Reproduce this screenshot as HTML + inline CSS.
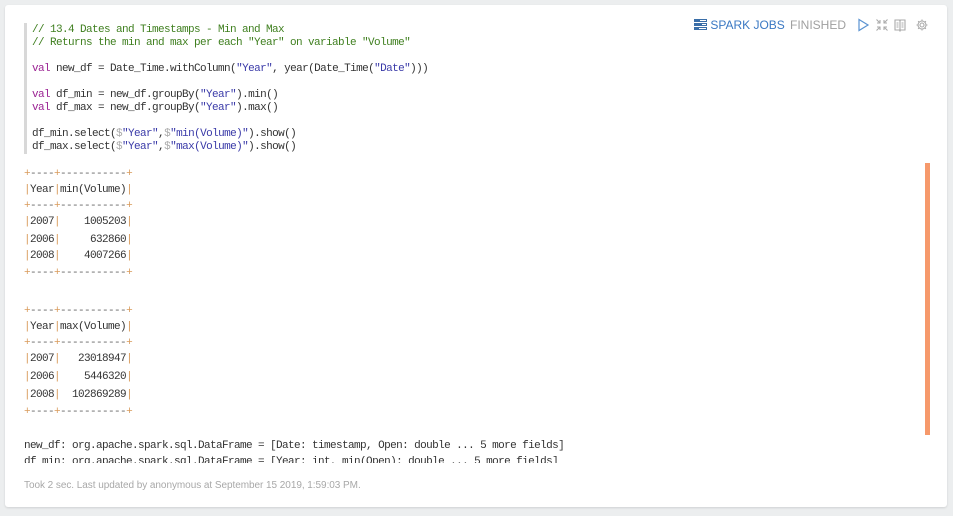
<!DOCTYPE html>
<html><head><meta charset="utf-8"><style>
body{margin:0;width:953px;height:516px;background:#eceeef;position:relative;overflow:hidden;font-family:"Liberation Mono",monospace}
.card{position:absolute;left:5px;top:5px;width:942px;height:502px;background:#fff;border-radius:3px;box-shadow:0 1px 2px rgba(0,0,0,.12)}
.bar{position:absolute;left:24px;top:23px;width:3px;height:131px;background:#d8d8d8}
.l{position:absolute;font-size:11px;letter-spacing:-0.6px;line-height:14px;white-space:pre;color:#333}
.c{color:#3f7f1f}.k{color:#9b2393}.s{color:#3a3aa8}.g{color:#aaa}.d{color:#666}
.o{color:#d89a5a}
.sb{position:absolute;left:925px;top:163px;width:5px;height:272px;background:#f6996b}
.hdr{position:absolute;top:18px;font-family:"Liberation Sans",sans-serif;font-size:12px;line-height:14px}
.ft{position:absolute;left:24px;top:480px;font-family:"Liberation Sans",sans-serif;font-size:10px;color:#a8a8a8;letter-spacing:-0.05px}
.clip{position:absolute;left:0;top:0;width:953px;height:463px;overflow:hidden}
</style></head><body>
<div class="card"></div>
<div class="bar"></div>
<div class="l c" style="left:32px;top:23px">// 13.4 Dates and Timestamps - Min and Max</div>
<div class="l c" style="left:32px;top:36px">// Returns the min and max per each "Year" on variable "Volume"</div>
<div class="l" style="left:32px;top:62px"><span class="k">val</span> new_df = Date_Time.withColumn(<span class="s">"Year"</span>, year(Date_Time(<span class="s">"Date"</span>)))</div>
<div class="l" style="left:32px;top:88px"><span class="k">val</span> df_min = new_df.groupBy(<span class="s">"Year"</span>).min()</div>
<div class="l" style="left:32px;top:101px"><span class="k">val</span> df_max = new_df.groupBy(<span class="s">"Year"</span>).max()</div>
<div class="l" style="left:32px;top:127px">df_min.select(<span class="g">$</span><span class="s">"Year"</span>,<span class="g">$</span><span class="s">"min(Volume)"</span>).show()</div>
<div class="l" style="left:32px;top:140px">df_max.select(<span class="g">$</span><span class="s">"Year"</span>,<span class="g">$</span><span class="s">"max(Volume)"</span>).show()</div>

<div class="hdr" style="left:694px;color:#3a78c3"><svg width="13" height="11" viewBox="0 0 13 11" style="vertical-align:-1px"><rect x="0" y="0" width="13" height="3" fill="#3a6ea8"/><rect x="0" y="4" width="13" height="3" fill="#3a6ea8"/><rect x="0" y="8" width="13" height="3" fill="#3a6ea8"/><rect x="6" y="1" width="6" height="1" fill="#fff"/><rect x="8" y="5" width="4" height="1" fill="#fff"/><rect x="5" y="9" width="7" height="1" fill="#fff"/></svg> SPARK JOBS</div>
<div class="hdr" style="left:790px;color:#a0a0a0">FINISHED</div>
<svg style="position:absolute;left:857px;top:18px" width="75" height="14" viewBox="0 0 75 14">
<path d="M2 1.5 L11 7 L2 12.5 Z" fill="none" stroke="#5b93d1" stroke-width="1.2"/>
<g stroke="#aaa" stroke-width="1.1" fill="none"><path d="M19.5 1.5l3.5 3.5M23 2v3h-3M30.5 1.5l-3.5 3.5M27 2v3h3M19.5 12.5l3.5-3.5M23 12V9h-3M30.5 12.5l-3.5-3.5M27 12V9h3"/>
<path d="M38 2h4.5l.5 1 .5-1H48v10h-4.5l-.5 1-.5-1H38zM43 3v9M39.5 5h2M39.5 7h2M39.5 9h2M44.5 5h2M44.5 7h2M44.5 9h2"/>
<circle cx="65" cy="7" r="2"/><path d="M65 1.5v2M65 10.5v2M59.5 7h2M68.5 7h2M61.1 3.1l1.4 1.4M67.5 9.5l1.4 1.4M61.1 10.9l1.4-1.4M67.5 4.5l1.4-1.4"/><circle cx="65" cy="7" r="4"/></g></svg>

<div class="clip">
<div class="l" style="left:24px;top:167px"><span class="o">+</span><span class="d">----</span><span class="o">+</span><span class="d">-----------</span><span class="o">+</span></div>
<div class="l" style="left:24px;top:183px"><span class="o">|</span>Year<span class="o">|</span>min(Volume)<span class="o">|</span></div>
<div class="l" style="left:24px;top:199px"><span class="o">+</span><span class="d">----</span><span class="o">+</span><span class="d">-----------</span><span class="o">+</span></div>
<div class="l" style="left:24px;top:215px"><span class="o">|</span>2007<span class="o">|</span>    1005203<span class="o">|</span></div>
<div class="l" style="left:24px;top:233px"><span class="o">|</span>2006<span class="o">|</span>     632860<span class="o">|</span></div>
<div class="l" style="left:24px;top:249px"><span class="o">|</span>2008<span class="o">|</span>    4007266<span class="o">|</span></div>
<div class="l" style="left:24px;top:266px"><span class="o">+</span><span class="d">----</span><span class="o">+</span><span class="d">-----------</span><span class="o">+</span></div>
<div class="l" style="left:24px;top:304px"><span class="o">+</span><span class="d">----</span><span class="o">+</span><span class="d">-----------</span><span class="o">+</span></div>
<div class="l" style="left:24px;top:320px"><span class="o">|</span>Year<span class="o">|</span>max(Volume)<span class="o">|</span></div>
<div class="l" style="left:24px;top:336px"><span class="o">+</span><span class="d">----</span><span class="o">+</span><span class="d">-----------</span><span class="o">+</span></div>
<div class="l" style="left:24px;top:352px"><span class="o">|</span>2007<span class="o">|</span>   23018947<span class="o">|</span></div>
<div class="l" style="left:24px;top:370px"><span class="o">|</span>2006<span class="o">|</span>    5446320<span class="o">|</span></div>
<div class="l" style="left:24px;top:388px"><span class="o">|</span>2008<span class="o">|</span>  102869289<span class="o">|</span></div>
<div class="l" style="left:24px;top:405px"><span class="o">+</span><span class="d">----</span><span class="o">+</span><span class="d">-----------</span><span class="o">+</span></div>
<div class="l" style="left:24px;top:439px">new_df: org.apache.spark.sql.DataFrame = [Date: timestamp, Open: double ... 5 more fields]</div>
<div class="l" style="left:24px;top:455px">df_min: org.apache.spark.sql.DataFrame = [Year: int, min(Open): double ... 5 more fields]</div>
</div>
<div class="sb"></div>
<div class="ft">Took 2 sec. Last updated by anonymous at September 15 2019, 1:59:03 PM.</div>
</body></html>
